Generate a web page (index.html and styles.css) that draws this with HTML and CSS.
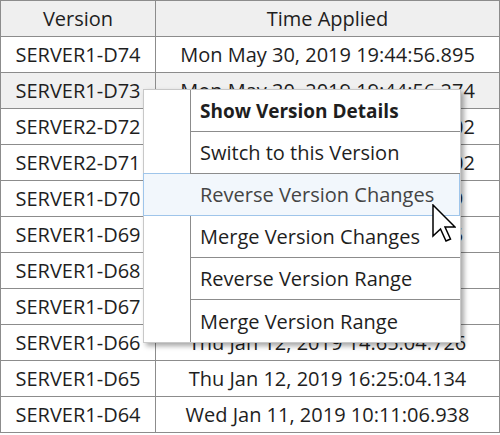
FILE: index.html
```html
<!DOCTYPE html>
<html lang="en">
<head>
  <meta charset="UTF-8" />
  <title>Version History</title>
  <link rel="stylesheet" href="styles.css">
</head>
<body>

<div class="page">
  <table class="versions">
    <tr>
      <th class="col-version">Version</th>
      <th>Time Applied</th>
    </tr>
    <tr><td>SERVER1-D74</td><td>Mon May 30, 2019 19:44:56.895</td></tr>
    <tr class="selected"><td>SERVER1-D73</td><td>Mon May 30, 2019 19:44:56.274</td></tr>
    <tr><td>SERVER2-D72</td><td>Mon May 30, 2019 19:44:56.102</td></tr>
    <tr><td>SERVER2-D71</td><td>Mon May 30, 2019 18:31:20.002</td></tr>
    <tr><td>SERVER1-D70</td><td>Sat Jan 14, 2019 11:02:41.309</td></tr>
    <tr><td>SERVER1-D69</td><td>Sat Jan 14, 2019 10:58:13.665</td></tr>
    <tr><td>SERVER1-D68</td><td>Fri Jan 13, 2019 17:20:37.573</td></tr>
    <tr><td>SERVER1-D67</td><td>Fri Jan 13, 2019 09:14:52.494</td></tr>
    <tr><td>SERVER1-D66</td><td>Thu Jan 12, 2019 14:65:04.726</td></tr>
    <tr><td>SERVER1-D65</td><td>Thu Jan 12, 2019 16:25:04.134</td></tr>
    <tr><td>SERVER1-D64</td><td>Wed Jan 11, 2019 10:11:06.938</td></tr>
  </table>

  <div class="menu">
    <div class="item"><span class="gutter"></span><span class="label bold">Show Version Details</span></div>
    <div class="item"><span class="gutter"></span><span class="label">Switch to this Version</span></div>
    <div class="item active"><span class="gutter"></span><span class="label">Reverse Version Changes</span></div>
    <div class="item"><span class="gutter"></span><span class="label">Merge Version Changes</span></div>
    <div class="item"><span class="gutter"></span><span class="label">Reverse Version Range</span></div>
    <div class="item"><span class="gutter"></span><span class="label last">Merge Version Range</span></div>
  </div>

  <svg class="cursor" width="24" height="38" viewBox="0 0 24 38">
    <path d="M1 1 L1 32 L8.5 25 L14 37 L18.5 35 L13 23 L23 23 Z" fill="#fff" stroke="#000" stroke-width="1.5" stroke-linejoin="miter"/>
  </svg>
</div>

</body>
</html>
```

FILE: styles.css
```css
body {
  margin: 0;
  font-family: "Open Sans", "Noto Sans", sans-serif;
  color: #1e1e1e;
  background: #fff;
}
.page {
  position: relative;
  width: 500px;
  height: 435px;
}
.versions {
  border-collapse: collapse;
  width: 500px;
  font-size: 20px;
}
.versions th,
.versions td {
  border: 1px solid #8c8c8c;
  height: 35px;
  padding: 0;
  text-align: center;
  font-weight: normal;
  white-space: nowrap;
}
.versions th {
  background: #efefef;
  font-size: 20px;
}
.col-version {
  width: 154px;
}
.versions tr.selected td {
  background: #f0f0f0;
}
.menu {
  position: absolute;
  left: 143px;
  top: 89px;
  width: 316px;
  background: #fff;
  border: 1px solid #c8c8c8;
  box-shadow: 3px 3px 5px rgba(0, 0, 0, 0.35);
  font-size: 20px;
}
.item {
  display: flex;
  height: 42px;
}
.gutter {
  width: 46px;
  border-right: 1px solid #8c8c8c;
}
.label {
  flex: 1;
  display: flex;
  align-items: center;
  padding-left: 9px;
  border-bottom: 1px solid #8c8c8c;
}
.label.last {
  border-bottom: none;
}
.bold {
  font-weight: bold;
  font-size: 19px;
}
.item.active {
  box-sizing: border-box;
  border: 1px solid #9fc5ea;
  background: #f2f7fc;
  margin: -1px 0 0 -1px;
  height: 43px;
}
.item.active .gutter {
  border-right: none;
  width: 47px;
}
.item.active .label {
  border-bottom: none;
  color: #444;
}
.cursor {
  position: absolute;
  left: 432px;
  top: 204px;
}
```
